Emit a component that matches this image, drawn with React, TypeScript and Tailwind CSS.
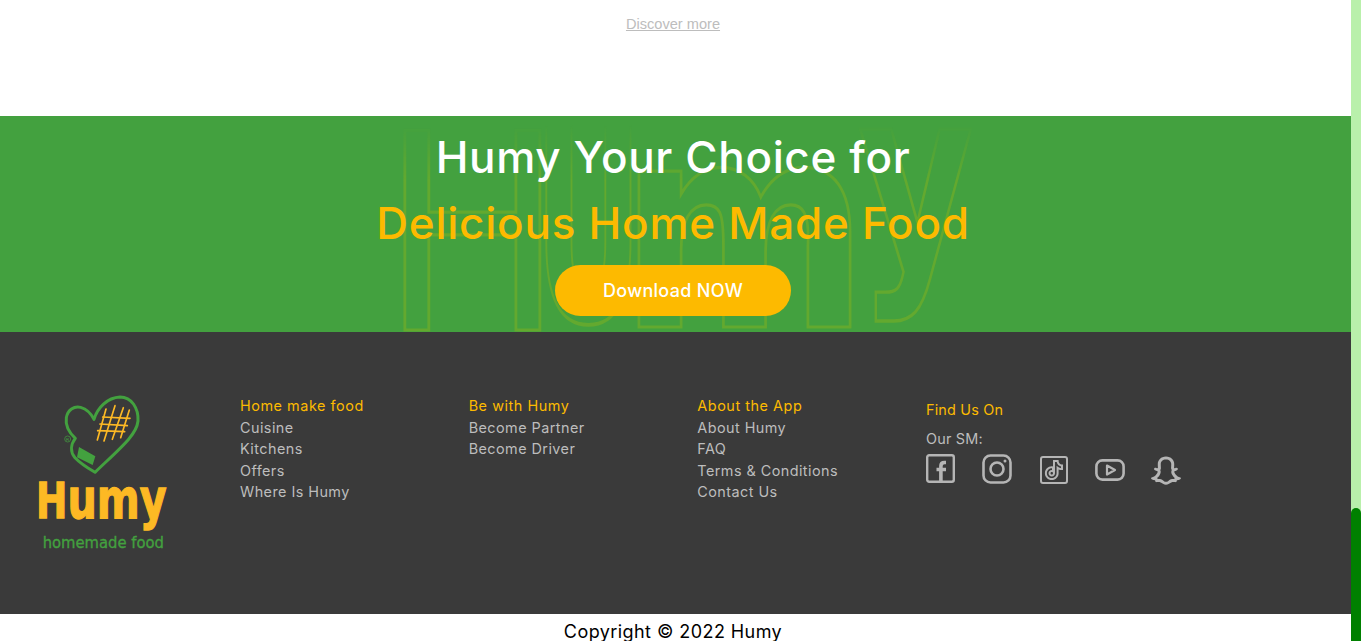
import { RiSnapchatLine, RiTiktokLine } from "react-icons/ri";

const columns = [
  { title: "Home make food", links: ["Cuisine", "Kitchens", "Offers", "Where Is Humy"] },
  { title: "Be with Humy", links: ["Become Partner", "Become Driver"] },
  { title: "About the App", links: ["About Humy", "FAQ", "Terms & Conditions", "Contact Us"] },
];

// background wordmark, one stretched letter at a time
const watermark = [
  { ch: "H", weight: 400, transform: "translate(13 214) scale(2.43 2.74)" },
  { ch: "U", weight: 700, transform: "translate(166 205) scale(1.34 2.7)" },
  { ch: "m", weight: 700, transform: "translate(251 211) scale(2.4 2.85)" },
  { ch: "y", weight: 700, transform: "translate(490 151) scale(1.78 2.52)" },
];

const Logo = () => (
  <svg viewBox="0 0 510 525" className="w-[170px] h-[175px] overflow-visible" fill="none">
    <path
      d="M225 262C205 250 180 234 165 218C150 200 152 178 166 160C150 145 135 125 139 98C143 75 162 62 182 67C200 72 213 85 222 103C232 68 262 38 300 36C335 36 356 70 354 108C350 150 300 190 225 262Z"
      stroke="#43a13f"
      strokeWidth="9"
      strokeLinejoin="round"
    />
    <path d="M177 186L226 214L218 240L171 217Z" fill="#43a13f" />
    <g stroke="#fdb924" strokeWidth="5" strokeLinecap="round">
      <path d="M258 72L232 165M285 62L252 168M310 68L277 163M328 75L302 158" />
      <path d="M248 96L330 100M240 117L322 122M233 137L314 140" />
    </g>
    <circle cx="143" cy="162" r="9" stroke="#43a13f" strokeWidth="2" />
    <text x="143" y="167" textAnchor="middle" fontSize="13" fill="#43a13f" fontFamily="Liberation Sans, sans-serif">R</text>
    <text
      x="48"
      y="400"
      textLength="392"
      lengthAdjust="spacingAndGlyphs"
      fontWeight="700"
      fill="#fdb924"
      stroke="#fdb924"
      strokeWidth="4"
      fontFamily="DejaVu Sans, sans-serif"
    >
      <tspan fontSize="150">H</tspan>
      <tspan fontSize="165">umy</tspan>
    </text>
    <text
      x="68"
      y="490"
      textLength="364"
      lengthAdjust="spacingAndGlyphs"
      fontSize="48"
      fill="#43a13f"
      stroke="#43a13f"
      strokeWidth="1"
      fontFamily="DejaVu Sans, sans-serif"
    >
      homemade food
    </text>
  </svg>
);

const SocialIcons = () => (
  <div className="flex items-center h-[32px] mt-[1px] text-[#b5b5b5]">
    <svg viewBox="0 0 30 30" className="w-[30px] h-[30px]" fill="none" stroke="currentColor" strokeWidth="2.4">
      <rect x="1.2" y="1.2" width="26.6" height="26.6" rx="2" />
      <path d="M20 8.5h-1.5c-2.4 0-3.6 1.4-3.6 3.6V28M10.5 15.5H20" strokeWidth="3.6" />
    </svg>
    <svg viewBox="0 0 30 30" className="w-[30px] h-[30px] ml-[26px]" fill="none" stroke="currentColor" strokeWidth="2.6">
      <rect x="1.5" y="1.5" width="27" height="27" rx="7" />
      <circle cx="15" cy="15" r="6.5" />
      <circle cx="23" cy="7" r="1.5" fill="currentColor" stroke="none" />
    </svg>
    <div className="w-[28px] h-[28px] ml-[28px] mt-[2px] border-[2.4px] border-current rounded-[3px] flex items-center justify-center">
      <RiTiktokLine className="w-[24px] h-[24px]" />
    </div>
    <svg viewBox="0 0 30 22" className="w-[30px] h-[22px] ml-[27px] mt-[2px]" fill="none" stroke="currentColor" strokeWidth="2.6">
      <rect x="1.4" y="1.4" width="27.2" height="19.2" rx="6" />
      <path d="M12 6.5L20 11L12 15.5Z" strokeLinejoin="round" strokeWidth="2.2" />
    </svg>
    <RiSnapchatLine className="w-[36px] h-[36px] ml-[23px] mt-[2px]" />
  </div>
);

export default function App() {
  return (
    <div className="flex h-[641px] overflow-hidden font-['Inter',sans-serif]">
      <main className="w-[1351px] shrink-0">
        <section className="h-[116px] bg-white pt-[14px] pr-[5px] text-center leading-[18px]">
          <a className="font-['Liberation_Sans',sans-serif] text-[14.6px] text-[#bdbdbd] underline">Discover more</a>
        </section>

        <section className="relative h-[216px] pr-[5px] bg-[#43a13f] flex flex-col items-center">
          <svg
            viewBox="0 0 610 216"
            className="absolute left-[368px] top-0 w-[610px] h-[216px] overflow-visible [mask-image:linear-gradient(to_bottom,transparent_4%,black_30%)]"
            fill="none"
          >
            {watermark.map((l) => (
              <text
                key={l.ch}
                transform={l.transform}
                fontSize="100"
                fontWeight={l.weight}
                stroke="#63a92f"
                strokeWidth="3"
                vectorEffect="non-scaling-stroke"
                fontFamily="DejaVu Sans, sans-serif"
              >
                {l.ch}
              </text>
            ))}
          </svg>
          <h2 className="relative mt-[10px] text-[44px] leading-[62px] font-medium tracking-[0.65px] text-white">Humy Your Choice for</h2>
          <h2 className="relative mt-[4px] text-[44px] leading-[62px] font-medium tracking-[0.75px] text-[#fdba00]">Delicious Home Made Food</h2>
          <button className="relative mt-[11px] w-[236px] h-[51px] rounded-full bg-[#fdba00] text-white text-[18px] tracking-[0.3px] font-medium">
            Download NOW
          </button>
        </section>

        <footer className="h-[282px] bg-[#3a3a3a] flex">
          <div className="w-[240px] shrink-0 pl-[20px] pt-[53px]">
            <Logo />
          </div>
          {columns.map((col) => (
            <div key={col.title} className="w-[228.67px] shrink-0 pt-[63px] text-[14.4px] leading-[21.6px] tracking-[0.45px] text-[#bdbdbd]">
              <h4 className="text-[#fdba00] tracking-[0.55px]">{col.title}</h4>
              {col.links.map((link) => (
                <div key={link}>{link}</div>
              ))}
            </div>
          ))}
          <div className="pt-[67px] text-[14.4px] leading-[21.6px] tracking-[0.2px] text-[#bdbdbd]">
            <h4 className="text-[#fdba00]">Find Us On</h4>
            <p className="mt-[7px] mb-[4px]">Our SM:</p>
            <SocialIcons />
          </div>
        </footer>

        <div className="h-[27px] pr-[5px] bg-white text-center text-[18px] leading-[36px] tracking-[0.43px] text-black">Copyright © 2022 Humy</div>
      </main>

      <div className="w-[10px] h-[641px] bg-[#b9f0ab] flex flex-col justify-end">
        <div className="h-[133px] bg-[#008000] rounded-t-[5px]" />
      </div>
    </div>
  );
}
